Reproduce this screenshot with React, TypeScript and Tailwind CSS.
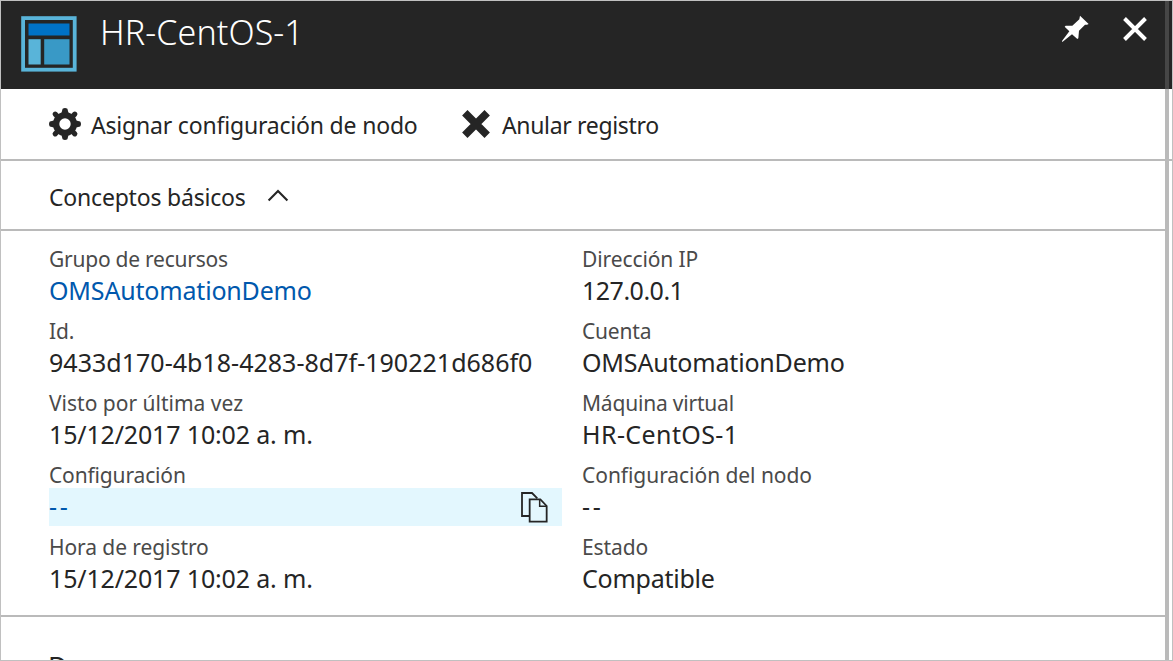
type Field = {
  label: string;
  value: string;
  labelClass: string;
  valueClass: string;
  link?: boolean;
  copy?: boolean;
};

const leftFields: Field[] = [
  { label: "Grupo de recursos", value: "OMSAutomationDemo", labelClass: "tracking-[-0.24px]", valueClass: "tracking-[-0.18px]", link: true },
  { label: "Id.", value: "9433d170-4b18-4283-8d7f-190221d686f0", labelClass: "tracking-[-0.2px]", valueClass: "tracking-[0.02px]" },
  { label: "Visto por última vez", value: "15/12/2017 10:02 a. m.", labelClass: "tracking-[0px]", valueClass: "tracking-[-0.16px]" },
  { label: "Configuración", value: "--", labelClass: "tracking-[-0.15px]", valueClass: "tracking-[2.6px]", link: true, copy: true },
  { label: "Hora de registro", value: "15/12/2017 10:02 a. m.", labelClass: "tracking-[-0.08px]", valueClass: "tracking-[-0.16px]" },
];

const rightFields: Field[] = [
  { label: "Dirección IP", value: "127.0.0.1", labelClass: "tracking-[-0.1px]", valueClass: "tracking-[-0.5px]" },
  { label: "Cuenta", value: "OMSAutomationDemo", labelClass: "tracking-[-0.2px]", valueClass: "tracking-[-0.18px]" },
  { label: "Máquina virtual", value: "HR-CentOS-1", labelClass: "tracking-[-0.2px]", valueClass: "tracking-[0.4px]" },
  { label: "Configuración del nodo", value: "--", labelClass: "tracking-[-0.05px]", valueClass: "tracking-[2.6px]" },
  { label: "Estado", value: "Compatible", labelClass: "tracking-[-0.1px]", valueClass: "tracking-[-0.25px]" },
];

function NodeLogo() {
  return (
    <svg className="h-14 w-14" viewBox="0 0 56 56">
      <rect x="2.1" y="2.1" width="51.6" height="51.6" fill="none" stroke="#59b4d9" strokeWidth="3.8" />
      <rect x="7.5" y="7.5" width="41" height="12" fill="#0072c6" />
      <rect x="7.5" y="23.2" width="12.2" height="25.3" fill="#59b4d9" />
      <rect x="23.2" y="23.2" width="25.3" height="25.3" fill="#3999c6" />
    </svg>
  );
}

function PinIcon() {
  return (
    <svg className="h-[27px] w-[27px]" viewBox="21 21 81 81">
      <path fill="#fff" d="M75 23L101 48L96 50L90 50L72 68L70 91L67 93L51 79L22 102L21 99L43 70L29 56L32 53L52 53L73 34Z" />
    </svg>
  );
}

function CloseIcon() {
  return (
    <svg className="h-6 w-6" viewBox="0 0 24 24" stroke="#fff" strokeWidth="3.9">
      <path d="M1.5 1.5L22.5 22.5M22.5 1.5L1.5 22.5" />
    </svg>
  );
}

function GearIcon() {
  return (
    <svg className="h-8 w-8" viewBox="-16 -16 32 32">
      <circle r="8.9" fill="none" stroke="#252525" strokeWidth="6.4" />
      <path d="M-3.8 -10L-2.4 -15.2Q0 -16.8 2.4 -15.2L3.8 -10ZM-3.8 10L-2.4 15.2Q0 16.8 2.4 15.2L3.8 10ZM-10 -3.8L-15.2 -2.4Q-16.8 0 -15.2 2.4L-10 3.8ZM10 -3.8L15.2 -2.4Q16.8 0 15.2 2.4L10 3.8Z" fill="#252525" />
      <path d="M-8 -8L-9.8 -9.8M8 -8L9.8 -9.8M-8 8L-9.8 9.8M8 8L9.8 9.8" stroke="#252525" strokeWidth="5.2" strokeLinecap="round" />
    </svg>
  );
}

function RemoveIcon() {
  return (
    <svg className="h-7 w-7" viewBox="0 0 28 28" stroke="#252525" strokeWidth="7.6">
      <path d="M2.8 2.8L25.2 25.2M25.2 2.8L2.8 25.2" />
    </svg>
  );
}

function ChevronUpIcon() {
  return (
    <svg className="mt-px h-[13px] w-[22px]" viewBox="0 0 22 13" fill="none" stroke="#252525" strokeWidth="2.1">
      <path d="M1.6 11.4L11 2L20.4 11.4" />
    </svg>
  );
}

function CopyIcon() {
  return (
    <svg className="h-[31px] w-[27px]" viewBox="64 35 81 93" fill="none" stroke="#252525" strokeWidth="5.4">
      <path d="M88 107H67V38H97L113 54" />
      <path d="M90 57H122L141 77V124H90Z" />
      <path d="M120 57V78H141" strokeWidth="4.5" />
    </svg>
  );
}

function FieldItem({ field }: { field: Field }) {
  return (
    <div className="mb-2 whitespace-nowrap">
      <div className={`h-[26px] text-[21px] leading-[26px] text-[#4a4a4a] ${field.labelClass}`}>{field.label}</div>
      <div
        className={`flex h-[38px] items-center justify-between pr-[14px] text-[25px] ${field.link ? "text-[#0058ad]" : "text-[#252525]"} ${field.copy ? "bg-[#e3f7fe]" : ""} ${field.valueClass}`}
      >
        <span>{field.value}</span>
        {field.copy && <CopyIcon />}
      </div>
    </div>
  );
}

export default function App() {
  return (
    <div className="relative h-[661px] w-[1173px] overflow-hidden border border-[#c0c0c0] bg-white font-['Noto_Sans','Open_Sans',sans-serif] text-[#252525]">
      <header className="flex h-[88px] items-start bg-[#252525] pl-5 pt-[15px] text-white">
        <NodeLogo />
        <h1 className="-mt-2 ml-[23px] text-[34px] leading-[48px] font-light tracking-[0.1px]">HR-CentOS-1</h1>
        <div className="-mt-px mr-[25px] ml-auto flex items-center gap-[34px]">
          <PinIcon />
          <CloseIcon />
        </div>
      </header>

      <div className="flex h-[72px] items-center border-b-2 border-[#bababa] pl-12 text-[23px] whitespace-nowrap">
        <div className="flex w-[413px] items-center gap-2.5">
          <GearIcon />
          <span className="mt-0.5 tracking-[-0.19px]">Asignar configuración de nodo</span>
        </div>
        <div className="flex items-center gap-3">
          <RemoveIcon />
          <span className="mt-0.5 tracking-[-0.34px]">Anular registro</span>
        </div>
      </div>

      <div className="mr-[7px] flex h-[70px] items-center border-b-2 border-[#bababa] pl-12 text-[23px]">
        <span className="mt-1 w-[218px] tracking-[-0.2px]">Conceptos básicos</span>
        <ChevronUpIcon />
      </div>

      <div className="mr-[7px] flex h-[386px] border-b-2 border-[#bababa] pl-12 pt-[15px]">
        <div className="mr-5 w-[513px]">
          {leftFields.map((f) => (
            <FieldItem key={f.label} field={f} />
          ))}
        </div>
        <div className="w-[513px]">
          {rightFields.map((f) => (
            <FieldItem key={f.label} field={f} />
          ))}
        </div>
      </div>

      <div className="h-[43px] overflow-hidden pl-[47px] pt-[30px] text-[27px] leading-[40px]">D</div>

      <div className="absolute top-0 right-[3px] h-[659px] w-1 bg-[#bababa]">
        <div className="h-[88px] bg-[#464646]" />
      </div>
    </div>
  );
}
